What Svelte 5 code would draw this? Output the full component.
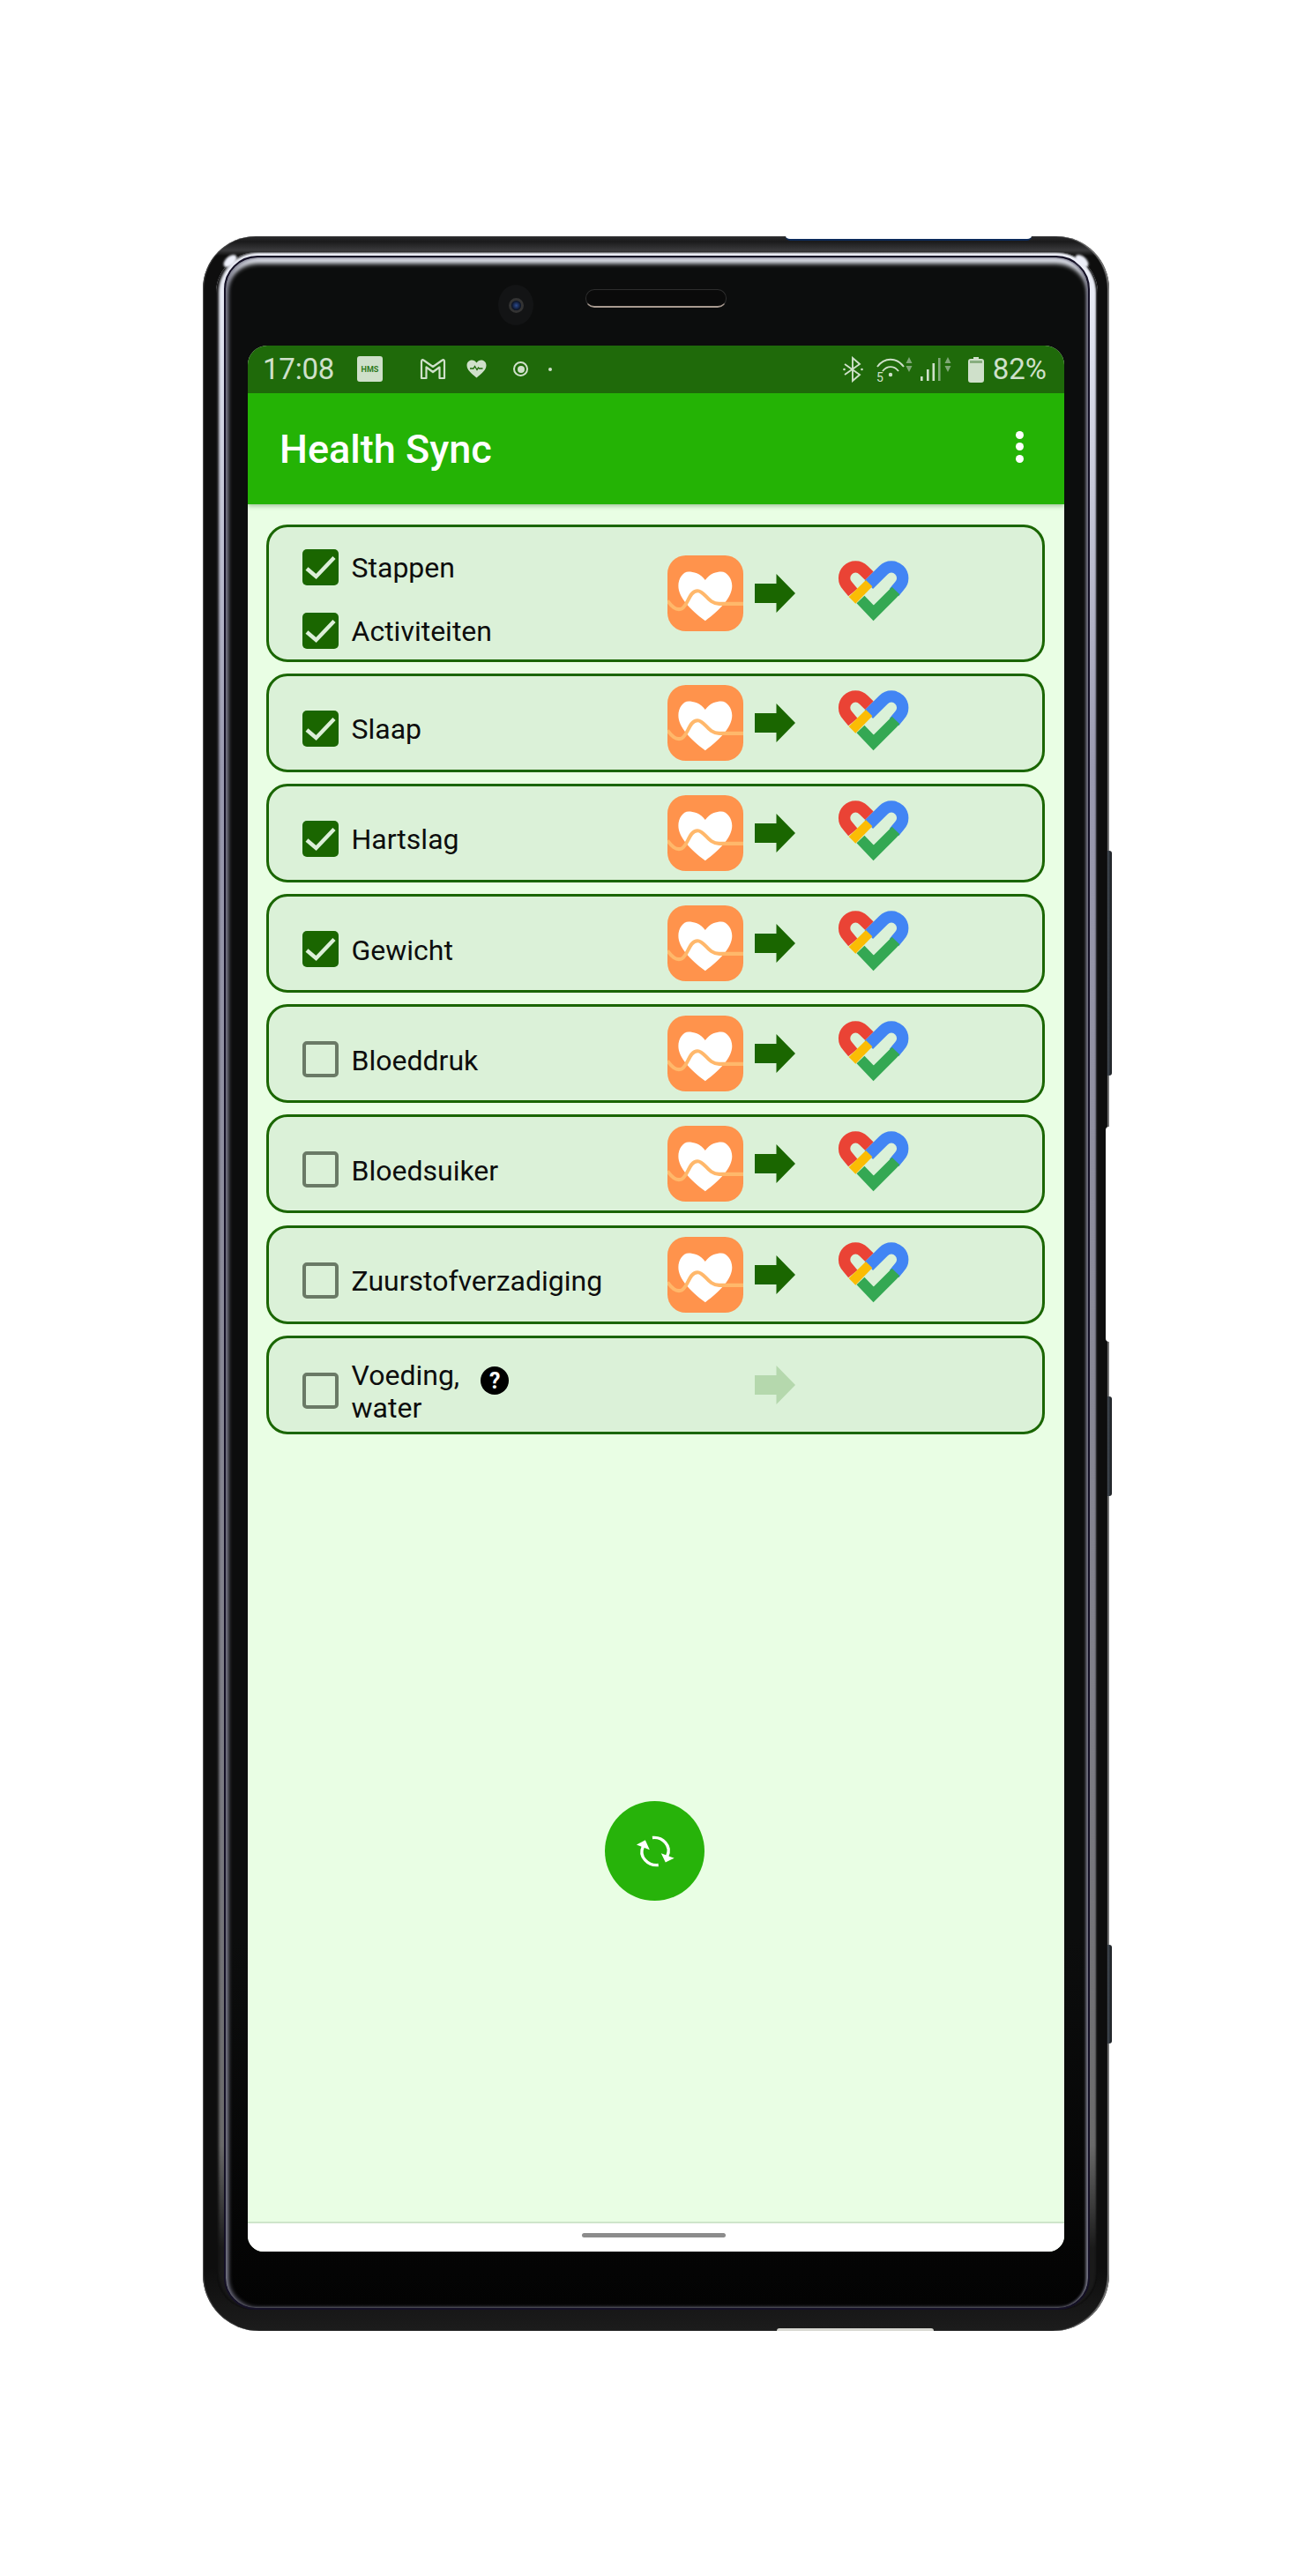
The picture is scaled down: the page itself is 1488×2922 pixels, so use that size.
<script>
  // one row per data type, `labels` groups the types that sync together
  const rows = [
    { labels: ['Stappen', 'Activiteiten'], checked: true, apps: true },
    { labels: ['Slaap'], checked: true, apps: true },
    { labels: ['Hartslag'], checked: true, apps: true },
    { labels: ['Gewicht'], checked: true, apps: true },
    { labels: ['Bloeddruk'], checked: false, apps: true },
    { labels: ['Bloedsuiker'], checked: false, apps: true },
    { labels: ['Zuurstofverzadiging'], checked: false, apps: true },
    { labels: ['Voeding,\nwater'], checked: false, apps: false, help: true }
  ];
</script>

<div class="phone">
  <span class="top-recess"></span>
  <span class="bottom-recess"></span>
  <span class="side-cut"></span>
  <span class="side-btn vol"></span>
  <span class="side-btn power"></span>
  <span class="side-btn shutter"></span>
  <span class="glint left"></span>
  <span class="glint right"></span>

  <div class="band">
    <div class="bezel">
      <div class="sensors">
        <span class="camera"><span class="lens"></span></span>
        <span class="speaker"></span>
      </div>

      <div class="screen">
        <div class="statusbar">
          <span class="time">17:08</span>
          <span class="hms">HMS</span>
          <svg class="st-m" width="30" height="25" viewBox="0 0 30 25"><path d="M2 23V4Q2 1 5 3L15 10 25 3Q28 1 28 4V23H22.500V10.500L15 16 7.500 10.500V23Z" fill="none" stroke="#cfe0ca" stroke-width="2.200" stroke-linejoin="round"/></svg>
          <svg class="st-heart" width="23" height="21" viewBox="0 0 23 21"><path d="M11.500 20.500C5 15 .5 11.500.5 6.500.5 3 3 .5 6.200.5c2.200 0 4 1.100 5.300 3C12.800 1.600 14.600.5 16.800.5 20 .5 22.500 3 22.500 6.500c0 5-4.500 8.500-11 14z" fill="#cfe0ca"/><path d="M4 10h4l1.500-2.500 2.500 4 1.500-2.500 1 1h4" fill="none" stroke="#1f6a0a" stroke-width="1.300"/></svg>
          <span class="st-ring"><span></span></span>
          <span class="st-dot"></span>
          <span class="spacer"></span>
          <svg class="st-bt" width="23" height="30" viewBox="0 0 23 30"><path d="M2 9l17 12-8 7V2l8 7L2 21" fill="none" stroke="#cfe0ca" stroke-width="1.900"/><circle cx="1.500" cy="15" r="1.300" fill="#cfe0ca"/><circle cx="21.500" cy="15" r="1.300" fill="#cfe0ca"/></svg>
          <svg class="st-wifi" width="42" height="30" viewBox="0 0 42 30"><g fill="none" stroke="#cfe0ca" stroke-width="1.900"><path d="M1 12C9 1 23 1 31 12"/><path d="M7 17c5-6.500 13-6.500 18 0"/></g><circle cx="16" cy="21" r="2.200" fill="#cfe0ca"/><text x="0" y="28.500" class="st-five">5</text><path d="M37 1l3.500 7h-7zM37 18l3.500-7h-7z" fill="#7fa877"/></svg>
          <svg class="st-signal" width="37" height="30" viewBox="0 0 37 30"><rect x="0" y="23" width="2.600" height="5" fill="#cfe0ca"/><rect x="7" y="15" width="2.600" height="13" fill="#cfe0ca"/><rect x="13.500" y="8" width="2.600" height="20" fill="#cfe0ca"/><rect x="20" y="2" width="2.600" height="26" fill="#7fa877"/><path d="M31 1l3.500 7h-7zM31 18l3.500-7h-7z" fill="#7fa877"/></svg>
          <svg class="st-batt" width="18" height="30" viewBox="0 0 18 30"><path d="M6 1h6v2h3a3 3 0 0 1 3 3v21a3 3 0 0 1-3 3H3a3 3 0 0 1-3-3V6a3 3 0 0 1 3-3h3z" fill="#cfe0ca"/><rect x="2" y="5" width="14" height="3" fill="#88ad7f"/></svg>
          <span class="pct">82%</span>
        </div>

        <div class="toolbar">
          <span class="title">Health Sync</span>
          <span class="overflow"><i></i><i></i><i></i></span>
        </div>

        <div class="content">
          {#each rows as row}
            <div class="card">
              <div class="types">
                {#each row.labels as label}
                  <div class="type">
                    <span class="box" class:on={row.checked}>
                      {#if row.checked}
                        <svg width="41" height="41" viewBox="0 0 41 41"><path d="M5 22l10.500 9L36 9.500" fill="none" stroke="#dcefd8" stroke-width="4.500"/></svg>
                      {/if}
                    </span>
                    <span class="label">{label}</span>
                    {#if row.help}
                      <span class="help">?</span>
                    {/if}
                  </div>
                {/each}
              </div>

              <div class="source">
                {#if row.apps}
                  <svg width="86" height="86" viewBox="53 62 257 257">
                    <rect x="53" y="62" width="257" height="257" rx="62" fill="#ff934c"/>
                    <path d="M181 146C165 122 140 117 125 117 105 117 90 140 90 165 90 205 130 245 181 284 232 245 272 205 272 165 272 140 255 117 235 117 220 117 197 122 181 146Z" fill="#fff"/>
                    <path d="M53 216C68 235 80 248 98 244 122 238 125 182 155 182 180 182 190 226 228 226H310" fill="none" stroke="#ffb86b" stroke-width="12"/>
                  </svg>
                {/if}
              </div>

              <svg class="arrow" class:off={!row.apps} width="46" height="44" viewBox="0 0 46 44"><path d="M0 11h24.500V0L46 22 24.500 44V33H0z"/></svg>

              <div class="target">
                {#if row.apps}
                  <svg width="84" height="70" viewBox="632 82 250 210">
                    <g fill="none" stroke-width="40">
                      <path d="M686 190L668 168A38 38 0 0 1 722 114L742 134" stroke="#ea4335"/>
                      <path d="M740 164L790 114A38 38 0 0 1 844 168L826 190" stroke="#4285f4"/>
                      <path d="M712 214L756 260 832 184" stroke="#34a853" stroke-width="37"/>
                    </g>
                    <path d="M672 205L695 228 752 170 730 148Z" fill="#fbbc04"/>
                  </svg>
                {/if}
              </div>
            </div>
          {/each}

          <div class="fab">
            <svg width="62" height="62" viewBox="150 138 200 200">
              <g fill="none" stroke="#fff" stroke-width="11">
                <path d="M262 288C225 292 188 258 206 220"/>
                <path d="M240 188C277 184 312 218 294 256"/>
              </g>
              <path d="M182 214L230 232 214 197ZM320 263L272 245 288 278Z" fill="#fff"/>
            </svg>
          </div>
        </div>

        <div class="navbar"><span class="pill"></span></div>
      </div>
    </div>
  </div>
</div>

<style>
  :global(body) {
    background: #fff;
  }

  .phone {
    position: relative;
    box-sizing: border-box;
    width: 1028px;
    height: 2376px;
    margin: 268px 0 278px 230px;
    padding: 18px 13px 24px 15px;
    border-radius: 60px 60px 64px 64px;
    background: linear-gradient(180deg, #2c2c2e 0, #1a1a1b 6px, #3a3a3c 16px, #0e0e0e 22px, #0e0e0e 97%, #1c1c1c 100%);
    box-shadow: inset 1px 0 1px #555, inset -2px 0 1px #777;
    font-family: Roboto, 'Liberation Sans', sans-serif;
  }

  .top-recess {
    position: absolute;
    left: 661px;
    top: 0;
    width: 279px;
    height: 5px;
    box-sizing: border-box;
    background: #fff;
    border-bottom: 2px solid #0b2a5a;
    border-radius: 0 0 8px 8px;
  }

  .bottom-recess {
    position: absolute;
    left: 651px;
    bottom: 0;
    width: 178px;
    height: 3px;
    background: #d8d8d2;
    border-radius: 6px 6px 0 0;
  }

  .side-cut {
    position: absolute;
    right: 0;
    top: 1010px;
    width: 4px;
    height: 244px;
    background: #fff;
    border-radius: 6px 0 0 6px;
  }

  .side-btn {
    position: absolute;
    right: -3px;
    width: 5px;
    background: linear-gradient(90deg, #444c55, #16191c);
    border-radius: 0 3px 3px 0;
  }

  .vol {
    top: 697px;
    height: 255px;
  }

  .power {
    top: 1316px;
    height: 113px;
  }

  .shutter {
    top: 1938px;
    height: 112px;
  }

  .glint {
    position: absolute;
    top: 19px;
    width: 10px;
    height: 18px;
    background: #eef0fa;
    border-radius: 50%;
    filter: blur(1px);
    z-index: 2;
  }

  .glint.left {
    left: 26px;
    transform: rotate(48deg);
  }

  .glint.right {
    right: 26px;
    transform: rotate(-48deg);
  }

  /* outer polished band, bright at the top and dull towards the chin */
  .band {
    height: 100%;
    box-sizing: border-box;
    padding: 4px 9px 0;
    border-radius: 46px 46px 42px 42px;
    background: linear-gradient(180deg, #f0f2fa 0, #dcdfec 5%, #9a9ab0 25%, #7f7f88 70%, #6a6a6a 92%, #1a1a1a 97%);
    box-shadow: inset 3px 0 3px #0e0e0e, inset -2px 0 2px #0e0e0e;
  }

  .bezel {
    height: 100%;
    box-sizing: border-box;
    padding: 0 27px 64px 25px;
    display: flex;
    flex-direction: column;
    border: 2.500px solid #141026;
    border-radius: 38px 38px 36px 36px;
    background: linear-gradient(180deg, #0c0d0d 0, #0c0d0d 82%, #030303 100%);
    box-shadow:
      inset 3px 0 5px #6f6f80,
      inset -2px 0 3px #6f6f80,
      inset 0 7px 5px #e4e7ef;
  }

  .sensors {
    flex: none;
    height: 99.500px;
    display: flex;
    align-items: flex-start;
    gap: 59px;
    padding-left: 284px;
  }

  .camera {
    width: 40px;
    height: 46px;
    margin-top: 31px;
    display: flex;
    align-items: center;
    justify-content: center;
    border-radius: 50%;
    background: #131415;
  }

  .lens {
    width: 17px;
    height: 17px;
    border-radius: 50%;
    border: 3px solid #333;
    box-sizing: border-box;
    background: radial-gradient(circle, #2b4a8e 0, #0a1020 70%);
  }

  .speaker {
    width: 160px;
    height: 21px;
    margin-top: 36px;
    box-sizing: border-box;
    border: 1px solid #2e2e2e;
    border-bottom: 2px solid #a89a90;
    border-radius: 10px;
    background: #0a0a0a;
  }

  .screen {
    flex: 1;
    min-height: 0;
    display: flex;
    flex-direction: column;
    overflow: hidden;
    border-radius: 22px 22px 18px 18px;
    background: #e9fee4;
  }

  .statusbar {
    flex: none;
    height: 54px;
    box-sizing: border-box;
    padding: 0 20px 0 17px;
    display: flex;
    align-items: center;
    background: #1f6a0a;
    color: #cfe0ca;
  }

  .time {
    width: 80px;
    font-size: 33px;
    letter-spacing: -0.2px;
  }

  .hms {
    width: 29px;
    height: 29px;
    margin-left: 27px;
    display: flex;
    align-items: center;
    justify-content: center;
    border-radius: 3px;
    background: #cfe0ca;
    color: #2e7a1b;
    font-size: 9px;
    font-weight: 700;
  }

  .st-m {
    margin-left: 42px;
  }

  .st-heart {
    margin-left: 23px;
  }

  .st-ring {
    width: 17px;
    height: 17px;
    margin-left: 30px;
    display: flex;
    align-items: center;
    justify-content: center;
    box-sizing: border-box;
    border: 2px solid #cfe0ca;
    border-radius: 50%;
  }

  .st-ring span {
    width: 8px;
    height: 8px;
    border-radius: 50%;
    background: #cfe0ca;
  }

  .st-dot {
    width: 4px;
    height: 4px;
    margin-left: 23px;
    border-radius: 50%;
    background: #cfe0ca;
  }

  .spacer {
    flex: 1;
  }

  .st-wifi {
    margin-left: 15px;
  }

  .st-five {
    font-family: Roboto, sans-serif;
    font-size: 14px;
    fill: #cfe0ca;
  }

  .st-signal {
    margin-left: 8px;
  }

  .st-batt {
    margin-left: 17px;
  }

  .pct {
    margin-left: 10px;
    font-size: 33px;
  }

  .toolbar {
    position: relative;
    flex: none;
    height: 126px;
    box-sizing: border-box;
    padding: 2px 46px 0 36px;
    display: flex;
    align-items: center;
    justify-content: space-between;
    background: #24b305;
    box-shadow: 0 2px 5px rgba(30, 90, 20, 0.35);
  }

  .title {
    color: #fff;
    font-size: 45px;
    font-weight: 500;
  }

  .overflow {
    display: flex;
    flex-direction: column;
    gap: 4.500px;
    margin-bottom: 6px;
  }

  .overflow i {
    width: 9px;
    height: 9px;
    border-radius: 50%;
    background: #fff;
  }

  .content {
    flex: 1;
    min-height: 0;
    box-sizing: border-box;
    padding: 23px 22px 0 21px;
    display: flex;
    flex-direction: column;
    gap: 13.200px;
  }

  .card {
    flex: none;
    min-height: 112px;
    box-sizing: border-box;
    padding-left: 37.500px;
    display: grid;
    grid-template-columns: 414px 86px 13px 46px 47px 84px;
    grid-template-areas: 'types source . arrow . target';
    align-items: center;
    border: 3px solid #1a6600;
    border-radius: 24px;
    background: #dbf1d8;
  }

  .types {
    grid-area: types;
    padding: 25px 0 12px;
    display: flex;
    flex-direction: column;
    gap: 31px;
  }

  /* fixed height so the two-line label overflows instead of growing its card */
  .type {
    height: 41px;
    display: flex;
    align-items: center;
    gap: 15px;
  }

  .box {
    flex: none;
    width: 41px;
    height: 41px;
    box-sizing: border-box;
    border: 4px solid #6a7a66;
    border-radius: 5px;
  }

  .box.on {
    border: none;
    background: #1a6600;
  }

  .box svg {
    display: block;
  }

  .label {
    padding-top: 3px;
    font-size: 32px;
    line-height: 37px;
    color: #0d0d0d;
    white-space: pre-line;
  }

  .help {
    width: 32px;
    height: 32px;
    margin: -22px 0 0 9px;
    display: flex;
    align-items: center;
    justify-content: center;
    border-radius: 50%;
    background: #000;
    color: #fff;
    font-size: 25px;
    font-weight: 700;
    line-height: 1;
  }

  .source {
    grid-area: source;
    height: 86px;
  }

  .source svg,
  .target svg {
    display: block;
  }

  .arrow {
    grid-area: arrow;
    fill: #1a6600;
  }

  .arrow.off {
    fill: #b5d8ad;
  }

  .target {
    grid-area: target;
    height: 70px;
    margin-bottom: 4px;
  }

  .fab {
    align-self: center;
    width: 113px;
    height: 113px;
    margin: 403px 0 0 -2px;
    display: flex;
    align-items: center;
    justify-content: center;
    border-radius: 50%;
    background: #27b30a;
  }

  .navbar {
    flex: none;
    height: 34px;
    box-sizing: border-box;
    padding-top: 11px;
    display: flex;
    justify-content: center;
    border-top: 2px solid #cfe5cb;
    background: #fff;
  }

  .pill {
    width: 163px;
    height: 5px;
    margin-left: -5px;
    border-radius: 3px;
    background: #8c8c8c;
  }
</style>
